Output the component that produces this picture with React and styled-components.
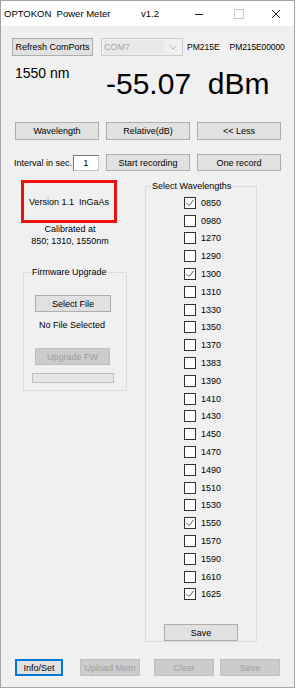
import React from "react";
import styled, { createGlobalStyle } from "styled-components";

const GlobalStyle = createGlobalStyle`
	html, body {
		margin: 0;
		padding: 0;
		background: #ffffff;
	}
	body {
		font-family: "Liberation Sans", Arial, sans-serif;
		font-size: 9px;
		color: #000;
	}
`;

const wavelengths = [
	["0850", true], ["0980", false], ["1270", false], ["1290", false],
	["1300", true], ["1310", false], ["1330", false], ["1350", false],
	["1370", false], ["1383", false], ["1390", false], ["1410", false],
	["1430", false], ["1450", false], ["1470", false], ["1490", false],
	["1510", false], ["1530", false], ["1550", true], ["1570", false],
	["1590", false], ["1610", false], ["1625", true],
];

const CheckBox = ({ checked }) => (
	<svg width="12" height="12" viewBox="0 0 12 12">
		<rect x="0.5" y="0.5" width="11" height="11" fill="#fff" stroke="#333" />
		{checked && (
			<polyline points="2.5,6 5,8.5 9.5,3" fill="none" stroke="#555" strokeWidth="1" />
		)}
	</svg>
);

const App = () => {
	return (
		<>
			<GlobalStyle />
			<Window>
				<TitleBar>
					<TitleText>OPTOKON  Power Meter</TitleText>
					<Version>v1.2</Version>
					<WinControls>
						<svg width="10" height="10" viewBox="0 0 10 10">
							<line x1="1" y1="5.5" x2="9" y2="5.5" stroke="#222" />
						</svg>
						<svg width="10" height="10" viewBox="0 0 10 10">
							<rect x="0.5" y="0.5" width="9" height="9" fill="none" stroke="#c8c8c8" />
						</svg>
						<svg width="10" height="10" viewBox="0 0 10 10">
							<path d="M1 1 L9 9 M9 1 L1 9" stroke="#222" strokeWidth="1" />
						</svg>
					</WinControls>
				</TitleBar>

				<Content>
					<PortRow>
						<Button $w={81} $h={18} style={{ marginLeft: -3 }}>Refresh ComPorts</Button>
						<Combo>
							<ComboText>COM7</ComboText>
							<svg width="8" height="5" viewBox="0 0 8 5">
								<polyline points="0.5,0.5 4,4 7.5,0.5" fill="none" stroke="#b5b5b5" />
							</svg>
						</Combo>
						<Model>PM215E</Model>
						<Serial>PM215E00000</Serial>
					</PortRow>

					<ReadingRow>
						<WaveLabel>1550 nm</WaveLabel>
						<Power>-55.07  dBm</Power>
					</ReadingRow>

					<ButtonGrid>
						<Button $h={18}>Wavelength</Button>
						<Button $h={18}>Relative(dB)</Button>
						<Button $h={18}>&lt;&lt; Less</Button>
					</ButtonGrid>

					<IntervalGrid>
						<IntervalCell>
							<span>Interval in sec.</span>
							<NumInput>1</NumInput>
						</IntervalCell>
						<Button $h={17}>Start recording</Button>
						<Button $h={17}>One record</Button>
					</IntervalGrid>

					<Main>
						<LeftCol>
							<RedBox>Version 1.1  InGaAs</RedBox>
							<Calibrated>
								Calibrated at
								<br />
								850; 1310, 1550nm
							</Calibrated>
							<Group $w={104} style={{ marginLeft: 8, marginTop: 20 }}>
								<Legend $ml={7}>Firmware Upgrade</Legend>
								<FirmwareBody>
									<Button $w={76} $h={17} style={{ marginLeft: 3, marginTop: 18 }}>Select File</Button>
									<Note>No File Selected</Note>
									<Button $w={75} $h={17} $disabled style={{ marginLeft: 3, marginTop: 17 }}>Upgrade FW</Button>
									<Progress />
								</FirmwareBody>
							</Group>
						</LeftCol>

						<Group $w={112} style={{ marginTop: 1 }}>
							<Legend $ml={5}>Select Wavelengths</Legend>
							<WaveList>
								{wavelengths.map(([nm, on]) => (
									<WaveRow key={nm}>
										<CheckBox checked={on} />
										<span>{nm}</span>
									</WaveRow>
								))}
							</WaveList>
							<Button $w={74} $h={17} style={{ marginLeft: 18, marginTop: 21 }}>Save</Button>
						</Group>
					</Main>

					<BottomRow>
						<Button $w={48} $h={17} $focused>Info/Set</Button>
						<Button $w={60} $h={17} $disabled style={{ marginLeft: 17 }}>Upload Mem</Button>
						<Button $w={60} $h={17} $disabled style={{ marginLeft: 14 }}>Clear</Button>
						<Button $w={60} $h={17} $disabled style={{ marginLeft: 6 }}>Save</Button>
					</BottomRow>
				</Content>
			</Window>
		</>
	);
};

const Window = styled.div`
	box-sizing: border-box;
	width: 295px;
	height: 688px;
	border: 1px solid #a5a5a5;
	background: #f0f0f0;
	display: flex;
	flex-direction: column;
	overflow: hidden;
`;

const TitleBar = styled.div`
	height: 25px;
	background: #ffffff;
	display: flex;
	align-items: center;
	padding-left: 3px;
	font-size: 9.5px;
	flex-shrink: 0;
`;

const TitleText = styled.span`
	white-space: pre;
	width: 137px;
`;

const Version = styled.span``;

const WinControls = styled.div`
	margin-left: auto;
	display: flex;
	align-items: center;
	gap: 27px;
	padding-right: 13px;
	svg {
		display: block;
	}
	svg:first-child {
		margin-right: 3px;
	}
`;

const Content = styled.div`
	padding-left: 14px;
	display: flex;
	flex-direction: column;
`;

const Button = styled.div`
	box-sizing: border-box;
	width: ${(p) => (p.$w ? `${p.$w}px` : "auto")};
	height: ${(p) => p.$h || 18}px;
	display: flex;
	align-items: center;
	justify-content: center;
	white-space: nowrap;
	font-size: 9px;
	background: ${(p) => (p.$disabled ? "#cccccc" : "#e1e1e1")};
	color: ${(p) => (p.$disabled ? "#9e9e9e" : "#000")};
	border: 1px solid ${(p) => (p.$disabled ? "#bfbfbf" : p.$focused ? "#0078d7" : "#adadad")};
	box-shadow: ${(p) => (p.$focused ? "inset 0 0 0 1px #0078d7" : "none")};
	flex-shrink: 0;
`;

const PortRow = styled.div`
	display: flex;
	align-items: center;
	margin-top: 12px;
	height: 18px;
`;

const Combo = styled.div`
	box-sizing: border-box;
	width: 82px;
	height: 18px;
	margin-left: 8px;
	border: 1px solid #cccccc;
	background: #f0f0f0;
	display: flex;
	align-items: center;
	padding: 0 5px 0 2px;
	svg {
		margin-left: auto;
	}
`;

const ComboText = styled.span`
	color: #a5a5a5;
	font-size: 9px;
	background: #e9e9e9;
	flex: 1;
	height: 14px;
	line-height: 14px;
	margin-right: 5px;
`;

const Model = styled.span`
	margin-left: 4px;
	font-size: 8.5px;
`;

const Serial = styled.span`
	margin-left: 10px;
	font-size: 8.5px;
	letter-spacing: -0.1px;
	white-space: nowrap;
`;

const ReadingRow = styled.div`
	display: flex;
	align-items: flex-start;
	margin-top: 9px;
`;

const WaveLabel = styled.div`
	width: 91px;
	font-size: 14px;
	line-height: 16px;
`;

const Power = styled.div`
	margin-top: 4px;
	font-size: 30px;
	line-height: 30px;
	white-space: pre;
`;

const ButtonGrid = styled.div`
	display: grid;
	grid-template-columns: 84px 84px 84px;
	column-gap: 7px;
	margin-top: 23px;
`;

const IntervalGrid = styled(ButtonGrid)`
	margin-top: 14px;
`;

const IntervalCell = styled.div`
	display: flex;
	align-items: center;
	margin-left: -1px;
	white-space: nowrap;
	span {
		width: 59px;
	}
`;

const NumInput = styled.div`
	box-sizing: border-box;
	width: 26px;
	height: 16px;
	background: #fff;
	border: 1px solid #7a7a7a;
	border-right-color: #c8c8c8;
	border-bottom-color: #c8c8c8;
	display: flex;
	align-items: center;
	justify-content: center;
	font-size: 9.5px;
`;

const Main = styled.div`
	display: flex;
	align-items: flex-start;
	margin-top: 9px;
`;

const LeftCol = styled.div`
	width: 130px;
	display: flex;
	flex-direction: column;
`;

const RedBox = styled.div`
	box-sizing: border-box;
	width: 96px;
	height: 43px;
	margin-left: 6px;
	border: 3px solid #ee1111;
	display: flex;
	align-items: center;
	justify-content: center;
	white-space: pre;
	font-size: 9px;
`;

const Calibrated = styled.div`
	width: 110px;
	text-align: center;
	line-height: 12px;
	font-size: 9px;
`;

const Group = styled.fieldset`
	box-sizing: border-box;
	width: ${(p) => p.$w}px;
	margin: 0;
	padding: 0;
	border: 1px solid #dcdcdc;
	min-inline-size: 0;
`;

const Legend = styled.legend`
	margin-left: ${(p) => p.$ml}px;
	padding: 0 1px;
	font-size: 9px;
	line-height: 10px;
	white-space: nowrap;
`;

const FirmwareBody = styled.div`
	display: flex;
	flex-direction: column;
	align-items: flex-start;
	padding: 0 0 7px 8px;
`;

const Note = styled.div`
	margin: 7px 0 0 7px;
	line-height: 12px;
	font-size: 9px;
`;

const Progress = styled.div`
	box-sizing: border-box;
	width: 82px;
	height: 10px;
	margin-top: 8px;
	border: 1px solid #bcbcbc;
	background: #e6e6e6;
`;

const WaveList = styled.div`
	margin-top: 3px;
	padding-left: 38px;
	display: flex;
	flex-direction: column;
`;

const WaveRow = styled.div`
	height: 17.8px;
	display: flex;
	align-items: center;
	gap: 5px;
	font-size: 9px;
	svg {
		display: block;
		flex-shrink: 0;
	}
`;

const BottomRow = styled.div`
	display: flex;
	margin-top: 17px;
	& > div:last-child {
		margin-bottom: 2px;
	}
`;

export default App;
